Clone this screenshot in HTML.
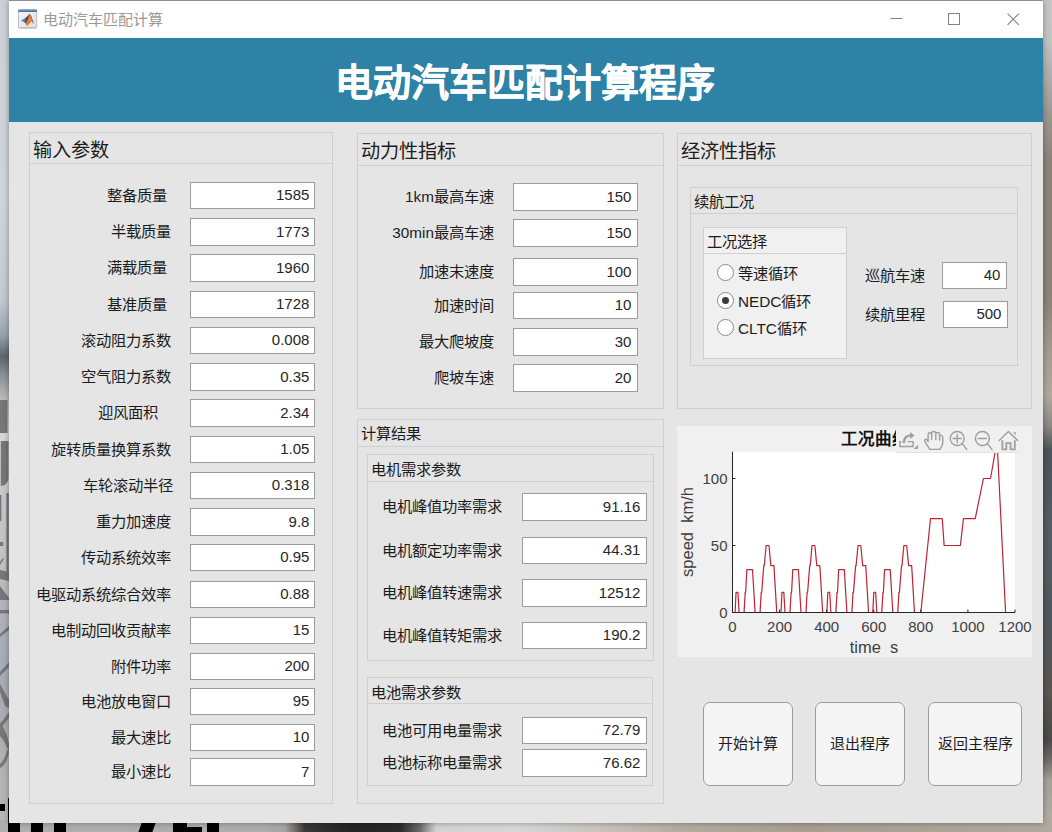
<!DOCTYPE html>
<html lang="zh-CN">
<head>
<meta charset="utf-8">
<title>电动汽车匹配计算</title>
<style>
html,body{margin:0;padding:0}
body{width:1052px;height:832px;overflow:hidden;position:relative;background:#b5b2ad;
 font-family:"Liberation Sans",sans-serif;font-size:15px;color:#1c1c1c}
.bg-l{position:absolute;left:0;top:0;width:10px;height:832px;
 background:linear-gradient(to bottom,#cdd1d5 0,#d0d5da 200px,#c2c9d0 300px,#9aa3ab 335px,#5c666d 356px,#8c9094 375px,#b9b9b9 398px,#bdbdbd 400px,#d6d6d6 434px,#d6d6d6 440px,#c8c8ca 490px,#c4c2c0 560px,#bcbcbe 585px,#b0b3bb 610px,#a8acb8 660px,#acacb0 720px,#b4b4b4 770px,#b6b6b6 832px)}
.bgl2{position:absolute;left:0;top:0}
.bg-r{position:absolute;left:1042px;top:0;width:10px;height:832px;
 background:linear-gradient(to bottom,#c6c6c6 0,#c4c4c4 40px,#9a958d 120px,#8b8479 160px,#8c8478 300px,#a39b8f 350px,#b0a99d 395px,#8d8a84 425px,#4b5559 450px,#535f63 540px,#4e585c 620px,#5a5652 690px,#4b4947 740px,#6e6c68 760px,#a3a097 780px,#b5b1a7 832px)}
.bg-b{position:absolute;left:0;top:820px;width:1052px;height:12px;
 background:linear-gradient(to right,#b0b0b0 0,#adadad 264px,#a8a4a0 285px,#3a3836 305px,#262422 350px,#2c2a28 400px,#6a6a6a 420px,#d4d4d4 436px,#d8d8d8 520px,#c8c4be 600px,#b4aca0 680px,#a89f92 800px,#aaa296 900px,#b2aa9e 1052px)}
.win{position:absolute;left:9px;top:0;width:1034px;height:823px;background:#e5e5e5;overflow:hidden;
 box-shadow:0 0 6px rgba(0,0,0,.35)}
.tb{position:absolute;left:0;top:0;width:1034px;height:38px;background:#fff;box-sizing:border-box;border-top:1px solid #8f8f8f}
.tb .ico{position:absolute;left:9px;top:8px}
.tb .tt{position:absolute;left:34px;top:9px;font-size:15px;line-height:20px;color:#999}
.tb .wc{position:absolute;left:873px;top:-1px}
.bn{position:absolute;left:0;top:38px;width:1034px;height:84px;box-sizing:border-box;padding-right:2px;background:#2e82a6;color:#fff;
 font-size:38px;font-weight:bold;text-align:center;line-height:90.4px;-webkit-text-stroke:0.55px #fff;letter-spacing:0}
.pn{position:absolute;box-sizing:border-box;border:1px solid #cfcfcf}
.pn.lt{background:#f0f0f0}
.pt{box-sizing:border-box;border-bottom:1px solid #cfcfcf;padding-left:3.4px;font-size:15.3px;white-space:nowrap;overflow:hidden}
.pt.big{font-size:19.2px;padding-left:3px}
.ed{position:absolute;box-sizing:border-box;border:1px solid #9b9b9b;background:#fff;text-align:right;
 font-size:15px;color:#262626;white-space:nowrap}
.lb{position:absolute;font-size:15.3px;line-height:24px;white-space:nowrap}
.rd{position:absolute;width:17px;height:17px;box-sizing:border-box;border:1px solid #8a8a8a;border-radius:50%;background:#fff}
.rd i{position:absolute;left:4px;top:4px;width:7px;height:7px;border-radius:50%;background:#3a3a3a}
.ch{position:absolute}
.tk{font-family:"Liberation Sans",sans-serif;font-size:15px;fill:#404040}
.tl{font-family:"Liberation Sans",sans-serif;font-size:16.5px;fill:#404040}
.ct{font-family:"Liberation Sans",sans-serif;font-size:16.5px;font-weight:bold;fill:#111}
.bt{position:absolute;box-sizing:border-box;border:1px solid #9c9c9c;border-radius:7px;background:#f5f5f5;text-align:center;font-size:15px;white-space:nowrap}
.bg-b i{position:absolute;top:3px;height:9px;background:#000}
.bk{position:absolute;background:#000}

</style>
</head>
<body>
<div class="bg-l"></div><svg class="bgl2" width="9" height="832" viewBox="0 0 9 832"><g fill="#77777a"><rect x="0" y="400" width="7.5" height="33"/><path d="M0.8 441 H8.5 V478 Q8 485 0.8 486 Z"/><rect x="6.4" y="493" width="2.4" height="83"/><rect x="0" y="495" width="1.4" height="26"/><rect x="0" y="542" width="3.2" height="4"/><path d="M0 562 L3 558 L3.6 559.5 L0 565 Z"/><path d="M0 570 L9 572 V581 L0 579 Z"/><path d="M0 586 L9 598 V600 H0 Z"/><rect x="0" y="610" width="9" height="3.4"/><path d="M9 626 L0 634 V637 L9 630 Z"/><path d="M9 662 L0 672 V676 L9 667 Z"/><path d="M0 684 L9 700 V708 L5 706 L0 692 Z"/><path d="M9 712 L0 724 V729 L9 718 Z"/><path d="M0 722 Q7 732 9 744 L9 752 Q4 740 0 736 Z"/><path d="M9 752 Q7 764 0 768 V764 Q5 760 7 750 Z"/></g></svg><div class="bg-r"></div><div class="bg-b"><i style="left:8px;width:12px"></i><i style="left:31px;width:12px"></i><i style="left:54px;width:12px"></i><i style="left:140px;width:14px;transform:skewX(-20deg)"></i><i style="left:173px;width:14px"></i><i style="left:186px;width:16px;top:7px"></i><i style="left:207px;width:12px"></i></div><div class="bk" style="left:0;top:804px;width:5px;height:7px"></div><div class="bk" style="left:8px;top:798px;width:1px;height:30px"></div>
<div class="win">
<div class="tb"><svg class="ico" width="20" height="20" viewBox="0 0 20 20"><defs><linearGradient id="gh" x1="0" y1="0" x2="0" y2="1"><stop offset="0" stop-color="#8fb0d0"/><stop offset="1" stop-color="#456a92"/></linearGradient><linearGradient id="gb" x1="0" y1="0" x2="1" y2="1"><stop offset="0" stop-color="#f7f7f8"/><stop offset="1" stop-color="#dcdee2"/></linearGradient><linearGradient id="gbl" x1="0" y1="0" x2="1" y2="0"><stop offset="0" stop-color="#5b9bd0"/><stop offset="0.6" stop-color="#3f6fa8"/><stop offset="1" stop-color="#2b2f5c"/></linearGradient><linearGradient id="gor" x1="0" y1="0" x2="0" y2="1"><stop offset="0" stop-color="#c8661c"/><stop offset="0.45" stop-color="#f08a3c"/><stop offset="0.8" stop-color="#e8702a"/><stop offset="1" stop-color="#f2b030"/></linearGradient></defs><rect x="0.5" y="0.5" width="18.2" height="18.4" rx="1" fill="url(#gb)" stroke="#b9bdc3"/><path d="M0.3 1.2 Q0.3 0.2 1.3 0.2 H17.9 Q18.9 0.2 18.9 1.2 V2.9 H0.3 Z" fill="url(#gh)"/><path d="M0.4 18.9 H18.8" stroke="#a9adb3" stroke-width="0.8"/><path d="M2.8 11.6 L5.9 10.0 L9.9 7.0 L10.6 9 L8.4 11.2 L6.6 13.6 Z" fill="url(#gbl)"/><path d="M9.9 7.0 L11.0 5.0 L11.6 6 L10.4 10.4 L7.8 14.6 L6.6 13.6 L8.4 11.0 Z" fill="#6a2c1c"/><path d="M11.0 5.0 Q11.5 4.3 12.2 5.4 L13.5 10.2 L14.2 12.3 L12.1 13.8 L9.9 16.7 Q9.0 17.2 8.4 16.6 L7.5 14.8 L10.0 10.6 Z" fill="url(#gor)"/><path d="M12.2 5.4 L13.1 6.6 L14.6 10.9 L15.9 14.8 L14.8 13.9 L14.2 12.3 L13.5 10.2 Z" fill="#943c22"/></svg><span class="tt">电动汽车匹配计算</span><svg class="wc" width="140" height="38" viewBox="0 0 140 38"><path d="M8.5 18.5 H20.5" stroke="#808080" fill="none"/><rect x="66.5" y="13.5" width="11" height="11" stroke="#808080" fill="none"/><path d="M125.6 13.6 L136.9 24.9 M136.9 13.6 L125.6 24.9" stroke="#808080" stroke-width="1.1" fill="none"/></svg></div>
<div class="bn">电动汽车匹配计算程序</div>
<div class="pn " style="left:20px;top:132px;width:304px;height:672px"><div class="pt big" style="height:31px;line-height:35px">输入参数</div></div>
<div class="pn " style="left:348px;top:133px;width:307px;height:276px"><div class="pt big" style="height:32px;line-height:36px">动力性指标</div></div>
<div class="pn " style="left:348px;top:419px;width:307px;height:385px"><div class="pt " style="height:27px;line-height:27px">计算结果</div></div>
<div class="pn " style="left:358px;top:454px;width:287px;height:207px"><div class="pt " style="height:27px;line-height:29px">电机需求参数</div></div>
<div class="pn " style="left:358px;top:677px;width:286px;height:109px"><div class="pt " style="height:26px;line-height:30px">电池需求参数</div></div>
<div class="pn " style="left:668px;top:133px;width:355px;height:276px"><div class="pt big" style="height:32px;line-height:36px">经济性指标</div></div>
<div class="pn " style="left:681px;top:187px;width:328px;height:179px"><div class="pt " style="height:26px;line-height:28px">续航工况</div></div>
<div class="pn lt" style="left:694px;top:227px;width:144px;height:132px"><div class="pt " style="height:26px;line-height:27.0px">工况选择</div></div>
<div class="ed" style="left:181px;top:182px;width:125px;height:27px;line-height:24px;padding-right:4.6px">1585</div>
<div class="lb" style="right:876px;top:183.5px">整备质量</div>
<div class="ed" style="left:181px;top:218px;width:125px;height:28px;line-height:25px;padding-right:4.6px">1773</div>
<div class="lb" style="right:872px;top:220.0px">半载质量</div>
<div class="ed" style="left:181px;top:254px;width:125px;height:28px;line-height:25px;padding-right:4.6px">1960</div>
<div class="lb" style="right:876px;top:256.0px">满载质量</div>
<div class="ed" style="left:181px;top:291px;width:125px;height:27px;line-height:24px;padding-right:4.6px">1728</div>
<div class="lb" style="right:876px;top:292.5px">基准质量</div>
<div class="ed" style="left:181px;top:327px;width:125px;height:27px;line-height:24px;padding-right:4.6px">0.008</div>
<div class="lb" style="right:872px;top:328.5px">滚动阻力系数</div>
<div class="ed" style="left:181px;top:363px;width:125px;height:28px;line-height:25px;padding-right:4.6px">0.35</div>
<div class="lb" style="right:872px;top:365.0px">空气阻力系数</div>
<div class="ed" style="left:181px;top:399px;width:125px;height:28px;line-height:25px;padding-right:4.6px">2.34</div>
<div class="lb" style="right:885px;top:401.0px">迎风面积</div>
<div class="ed" style="left:181px;top:436px;width:125px;height:27px;line-height:24px;padding-right:4.6px">1.05</div>
<div class="lb" style="right:872px;top:437.5px">旋转质量换算系数</div>
<div class="ed" style="left:181px;top:472px;width:125px;height:27px;line-height:24px;padding-right:4.6px">0.318</div>
<div class="lb" style="right:870px;top:473.5px">车轮滚动半径</div>
<div class="ed" style="left:181px;top:508px;width:125px;height:28px;line-height:25px;padding-right:4.6px">9.8</div>
<div class="lb" style="right:872px;top:510.0px">重力加速度</div>
<div class="ed" style="left:181px;top:544px;width:125px;height:27px;line-height:24px;padding-right:4.6px">0.95</div>
<div class="lb" style="right:872px;top:545.5px">传动系统效率</div>
<div class="ed" style="left:181px;top:581px;width:125px;height:27px;line-height:24px;padding-right:4.6px">0.88</div>
<div class="lb" style="right:872px;top:582.5px">电驱动系统综合效率</div>
<div class="ed" style="left:181px;top:617px;width:125px;height:27px;line-height:24px;padding-right:4.6px">15</div>
<div class="lb" style="right:872px;top:618.5px">电制动回收贡献率</div>
<div class="ed" style="left:181px;top:653px;width:125px;height:27px;line-height:24px;padding-right:4.6px">200</div>
<div class="lb" style="right:872px;top:654.5px">附件功率</div>
<div class="ed" style="left:181px;top:688px;width:125px;height:27px;line-height:24px;padding-right:4.6px">95</div>
<div class="lb" style="right:872px;top:689.5px">电池放电窗口</div>
<div class="ed" style="left:181px;top:724px;width:125px;height:27px;line-height:24px;padding-right:4.6px">10</div>
<div class="lb" style="right:872px;top:725.5px">最大速比</div>
<div class="ed" style="left:181px;top:758px;width:125px;height:28px;line-height:25px;padding-right:4.6px">7</div>
<div class="lb" style="right:872px;top:760.0px">最小速比</div>
<div class="ed" style="left:504px;top:183px;width:125px;height:28px;line-height:25px;padding-right:5.6px">150</div>
<div class="lb" style="right:549px;top:185.0px">1km最高车速</div>
<div class="ed" style="left:504px;top:219px;width:125px;height:28px;line-height:25px;padding-right:5.6px">150</div>
<div class="lb" style="right:549px;top:221.0px">30min最高车速</div>
<div class="ed" style="left:504px;top:258px;width:125px;height:28px;line-height:25px;padding-right:5.6px">100</div>
<div class="lb" style="right:549px;top:260.0px">加速末速度</div>
<div class="ed" style="left:504px;top:292px;width:125px;height:27px;line-height:24px;padding-right:5.6px">10</div>
<div class="lb" style="right:549px;top:293.5px">加速时间</div>
<div class="ed" style="left:504px;top:328px;width:125px;height:28px;line-height:25px;padding-right:5.6px">30</div>
<div class="lb" style="right:549px;top:330.0px">最大爬坡度</div>
<div class="ed" style="left:504px;top:364px;width:125px;height:28px;line-height:25px;padding-right:5.6px">20</div>
<div class="lb" style="right:549px;top:366.0px">爬坡车速</div>
<div class="ed" style="left:513px;top:493px;width:125px;height:28px;line-height:25px;padding-right:5.6px">91.16</div>
<div class="lb" style="right:541px;top:495.0px">电机峰值功率需求</div>
<div class="ed" style="left:513px;top:537px;width:125px;height:27px;line-height:24px;padding-right:5.6px">44.31</div>
<div class="lb" style="right:541px;top:538.5px">电机额定功率需求</div>
<div class="ed" style="left:513px;top:579px;width:125px;height:28px;line-height:25px;padding-right:5.6px">12512</div>
<div class="lb" style="right:541px;top:581.0px">电机峰值转速需求</div>
<div class="ed" style="left:513px;top:622px;width:125px;height:27px;line-height:24px;padding-right:5.6px">190.2</div>
<div class="lb" style="right:541px;top:623.5px">电机峰值转矩需求</div>
<div class="ed" style="left:513px;top:717px;width:125px;height:27px;line-height:24px;padding-right:5.6px">72.79</div>
<div class="lb" style="right:541px;top:718.5px">电池可用电量需求</div>
<div class="ed" style="left:513px;top:749px;width:125px;height:28px;line-height:25px;padding-right:5.6px">76.62</div>
<div class="lb" style="right:541px;top:751.0px">电池标称电量需求</div>
<div class="rd" style="left:708px;top:264px"></div>
<div class="lb" style="left:729px;top:262px">等速循环</div>
<div class="rd" style="left:708px;top:292px"><i></i></div>
<div class="lb" style="left:729px;top:290px">NEDC循环</div>
<div class="rd" style="left:708px;top:319px"></div>
<div class="lb" style="left:729px;top:317px">CLTC循环</div>
<div class="lb" style="right:118px;top:263.5px">巡航车速</div>
<div class="ed" style="left:933px;top:262px;width:65px;height:27px;line-height:24px;padding-right:5.6px">40</div>
<div class="lb" style="right:118px;top:302.5px">续航里程</div>
<div class="ed" style="left:934px;top:301px;width:65px;height:27px;line-height:24px;padding-right:5.6px">500</div>
<svg class="ch" style="left:668px;top:426px" width="355" height="231" viewBox="0 0 355 231"><rect width="355" height="231" fill="#f0f0f0"/><rect x="55.5" y="25.7" width="282.5" height="160.8" fill="#fff"/><polyline points="55.50,186.50 58.09,186.50 59.03,166.40 60.91,166.40 62.09,186.50 67.04,186.50 68.21,166.40 68.68,166.40 69.86,143.62 75.51,143.62 78.10,186.50 83.04,186.50 84.22,166.40 84.69,166.40 86.81,139.60 87.28,139.60 89.16,119.50 91.99,119.50 93.87,139.60 96.93,139.60 99.76,186.50 101.41,186.50 101.41,186.50 104.00,186.50 104.94,166.40 106.82,166.40 108.00,186.50 112.94,186.50 114.12,166.40 114.59,166.40 115.77,143.62 121.42,143.62 124.01,186.50 128.95,186.50 130.13,166.40 130.60,166.40 132.72,139.60 133.19,139.60 135.07,119.50 137.90,119.50 139.78,139.60 142.84,139.60 145.66,186.50 147.31,186.50 147.31,186.50 149.90,186.50 150.84,166.40 152.73,166.40 153.90,186.50 158.85,186.50 160.02,166.40 160.50,166.40 161.67,143.62 167.32,143.62 169.91,186.50 174.86,186.50 176.03,166.40 176.50,166.40 178.62,139.60 179.09,139.60 180.98,119.50 183.80,119.50 185.69,139.60 188.75,139.60 191.57,186.50 193.22,186.50 193.22,186.50 195.81,186.50 196.75,166.40 198.63,166.40 199.81,186.50 204.75,186.50 205.93,166.40 206.40,166.40 207.58,143.62 213.23,143.62 215.82,186.50 220.76,186.50 221.94,166.40 222.41,166.40 224.53,139.60 225.00,139.60 226.88,119.50 229.71,119.50 231.59,139.60 234.65,139.60 237.48,186.50 239.12,186.50 239.12,186.50 243.83,186.50 253.49,92.70 265.26,92.70 267.14,119.50 283.38,119.50 286.44,92.70 298.21,92.70 306.45,52.50 313.52,52.50 318.23,25.70 320.58,25.70 328.58,186.50 333.29,186.50" fill="none" stroke="#bd2434" stroke-width="1.2" stroke-linejoin="round"/><path d="M55.5 25.7 V186.5 H338.0" stroke="#262626" stroke-width="1" fill="none"/><path d="M55.50 186.5 v-3" stroke="#262626" stroke-width="1"/><text x="55.5" y="206" text-anchor="middle" class="tk">0</text><path d="M102.58 186.5 v-3" stroke="#262626" stroke-width="1"/><text x="102.6" y="206" text-anchor="middle" class="tk">200</text><path d="M149.67 186.5 v-3" stroke="#262626" stroke-width="1"/><text x="149.7" y="206" text-anchor="middle" class="tk">400</text><path d="M196.75 186.5 v-3" stroke="#262626" stroke-width="1"/><text x="196.8" y="206" text-anchor="middle" class="tk">600</text><path d="M243.83 186.5 v-3" stroke="#262626" stroke-width="1"/><text x="243.8" y="206" text-anchor="middle" class="tk">800</text><path d="M290.92 186.5 v-3" stroke="#262626" stroke-width="1"/><text x="290.9" y="206" text-anchor="middle" class="tk">1000</text><path d="M338.00 186.5 v-3" stroke="#262626" stroke-width="1"/><text x="338.0" y="206" text-anchor="middle" class="tk">1200</text><path d="M55.5 186.50 h3" stroke="#262626" stroke-width="1"/><text x="50.5" y="191.8" text-anchor="end" class="tk">0</text><path d="M55.5 119.50 h3" stroke="#262626" stroke-width="1"/><text x="50.5" y="124.8" text-anchor="end" class="tk">50</text><path d="M55.5 52.50 h3" stroke="#262626" stroke-width="1"/><text x="50.5" y="57.8" text-anchor="end" class="tk">100</text><text x="197" y="227" text-anchor="middle" class="tl">time&#160;&#160;s</text><text transform="translate(16,106) rotate(-90)" text-anchor="middle" class="tl">speed&#160;&#160;km/h</text><text x="198.0" y="19.100000000000023" text-anchor="middle" class="ct">工况曲线</text><rect x="219" y="3" width="125" height="23.5" fill="#f0f0f0"/><path d="M219 26.5 h125" stroke="#e4e4e4"/><g fill="none" stroke="#9e9e9e" stroke-width="1.4" stroke-linecap="round" stroke-linejoin="round"><path d="M224.60 15.60 H222.90 V20.50 H236.10 V15.60 H230.60" stroke-linecap="butt" stroke-linejoin="miter"/><path d="M226.60 17.20 Q227.20 9.60 233.60 9.40" stroke-width="2.4" stroke-linecap="butt"/><path d="M233.20 5.90 L237.40 9.40 L233.20 12.90 Z" fill="#9e9e9e" stroke="none"/><path d="M236.90 22.90 H240.90 V18.40 Z" fill="#9e9e9e" stroke="none"/><g transform="translate(247.00 5.00)"><path d="M5.8 18.4 L1.0 10.8 Q-0.1 8.8 1.5 8.3 Q2.9 8.1 4.1 10.6 V3.6 Q4.1 1.8 5.8 1.8 Q7.6 1.8 7.6 3.6 V2.3 Q7.6 0.5 9.7 0.5 Q11.8 0.5 11.8 2.3 V3.2 Q11.8 1.5 13.7 1.5 Q15.6 1.5 15.6 3.2 V6.2 Q15.6 4.4 17.2 4.4 Q18.7 4.4 18.7 6.2 V12.4 Q18.4 14.8 15.9 18.4 Z M7.6 3.6 V8.6 M11.8 3.2 V8.6 M15.6 6.2 V9"/></g><circle cx="280.20" cy="12.50" r="7"/><path d="M285.20 17.60 L289.80 23.40 M276.10 12.50 h8.2 M280.20 8.50 v8.2"/><circle cx="305.40" cy="12.50" r="7"/><path d="M310.40 17.60 L315.00 23.40 M301.30 12.50 h8.2"/><path d="M322.20 14.40 L331.40 5.40 L340.60 14.40"/><path d="M325.40 14.20 V23.40 H329.30 V17.20 H333.60 V23.40 H337.80 V14.20" stroke-width="1.8" stroke-linecap="butt" stroke-linejoin="miter"/><path d="M336.30 6.20 H338.60 V8.90 Z" fill="#8e8e8e" stroke="none"/></g></svg>
<div class="bt" style="left:694px;top:702px;width:90px;height:84px;line-height:82px">开始计算</div>
<div class="bt" style="left:806px;top:702px;width:90px;height:84px;line-height:82px">退出程序</div>
<div class="bt" style="left:919px;top:702px;width:94px;height:84px;line-height:82px">返回主程序</div>
</div>
</body>
</html>
